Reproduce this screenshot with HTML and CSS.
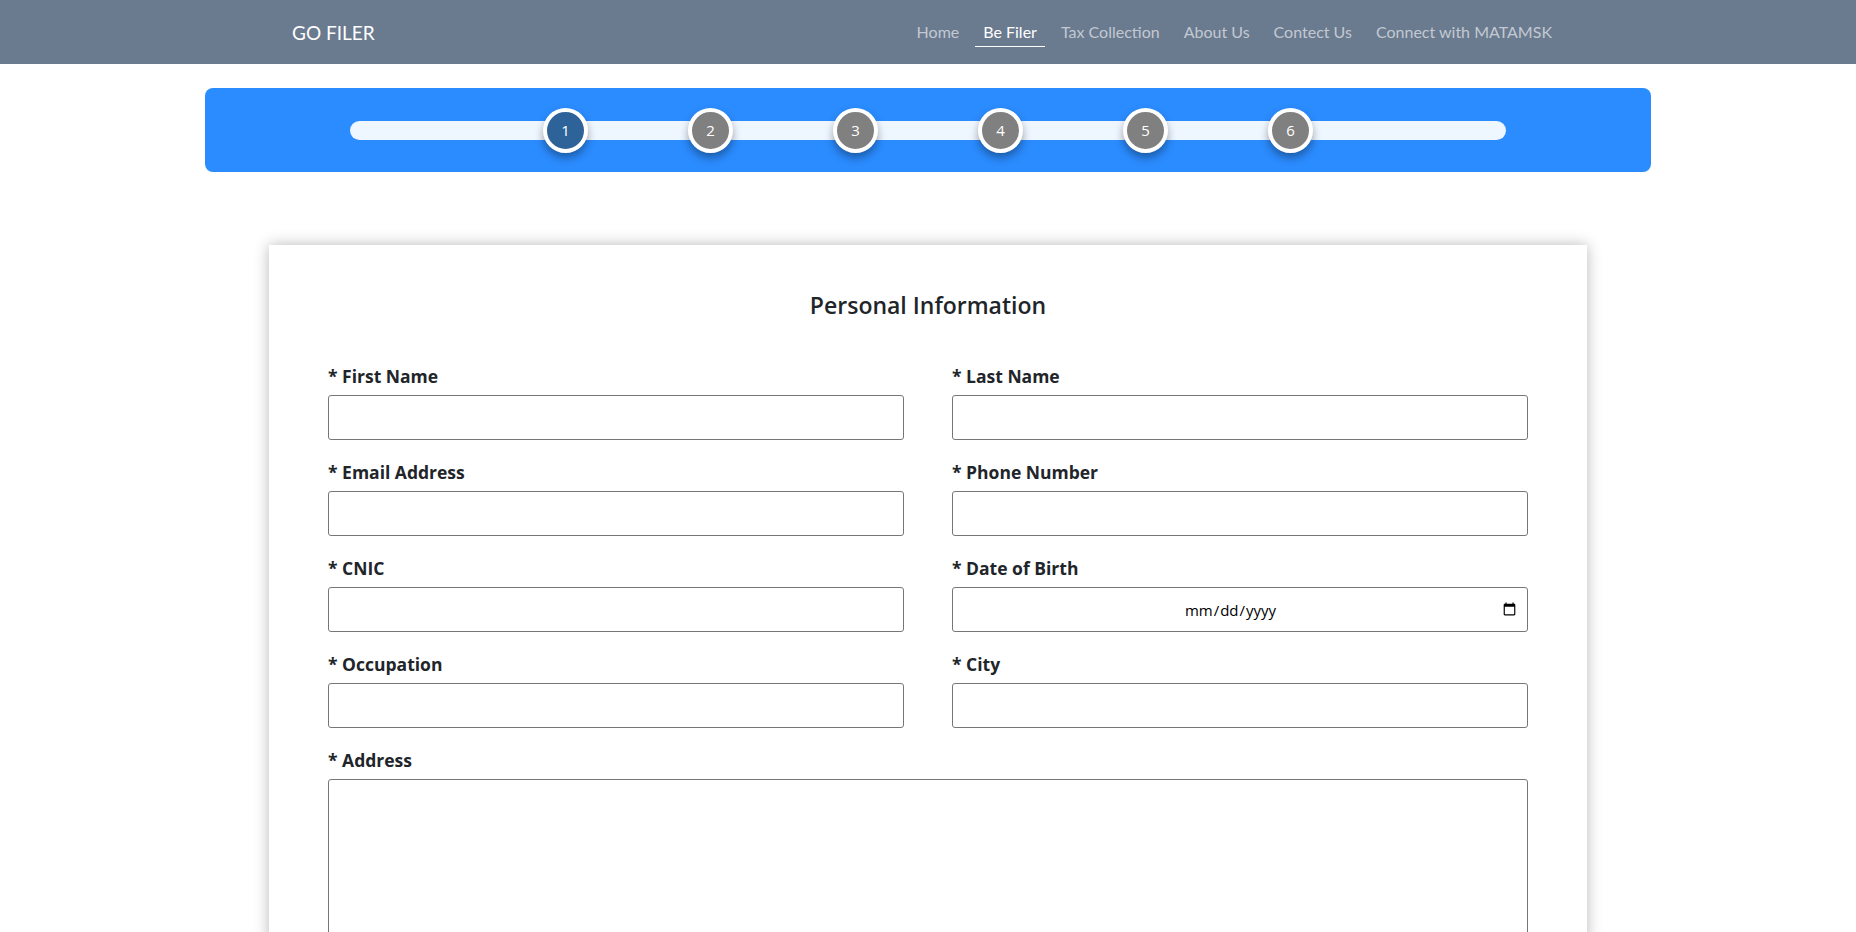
FILE: index.html
```html
<!DOCTYPE html>
<html>
<head>
<meta charset="utf-8">
<title>GO FILER</title>
<link rel="stylesheet" href="styles.css">
</head>
<body>
<header class="navbar">
  <div class="nav-inner">
    <a class="brand" href="#">GO FILER</a>
    <nav class="nav-links">
      <a href="#" class="nav-link">Home</a>
      <a href="#" class="nav-link active">Be Filer</a>
      <a href="#" class="nav-link">Tax Collection</a>
      <a href="#" class="nav-link">About Us</a>
      <a href="#" class="nav-link">Contect Us</a>
      <a href="#" class="nav-link">Connect with MATAMSK</a>
    </nav>
  </div>
</header>

<section class="progress-box">
  <div class="track">
    <span class="step current">1</span>
    <span class="step">2</span>
    <span class="step">3</span>
    <span class="step">4</span>
    <span class="step">5</span>
    <span class="step">6</span>
  </div>
</section>

<main class="card">
  <h2 class="card-title">Personal Information</h2>
  <form class="form-grid">
    <div class="field">
      <label class="label">* First Name</label>
      <input class="input" type="text">
    </div>
    <div class="field">
      <label class="label">* Last Name</label>
      <input class="input" type="text">
    </div>
    <div class="field">
      <label class="label">* Email Address</label>
      <input class="input" type="email">
    </div>
    <div class="field">
      <label class="label">* Phone Number</label>
      <input class="input" type="text">
    </div>
    <div class="field">
      <label class="label">* CNIC</label>
      <input class="input" type="text">
    </div>
    <div class="field">
      <label class="label">* Date of Birth</label>
      <input class="input date" type="date">
    </div>
    <div class="field">
      <label class="label">* Occupation</label>
      <input class="input" type="text">
    </div>
    <div class="field">
      <label class="label">* City</label>
      <input class="input" type="text">
    </div>
    <div class="field full">
      <label class="label">* Address</label>
      <textarea class="input textarea"></textarea>
    </div>
  </form>
</main>
</body>
</html>
```
FILE: styles.css
```css
* { box-sizing: border-box; }
html, body { margin: 0; padding: 0; }
body {
  font-family: Lato, "Noto Sans", sans-serif;
  color: #212529;
  background: #fff;
}
.navbar {
  background: #6a7a8f;
  height: 64px;
}
.nav-inner {
  width: 1296px;
  margin: 0 auto;
  height: 100%;
  display: flex;
  align-items: center;
  justify-content: space-between;
  padding: 0 16px 0 12px;
}
.brand {
  color: #fff;
  text-decoration: none;
  font-size: 19px;
}
.nav-links {
  display: flex;
  gap: 8px;
  align-items: center;
}
.nav-link {
  color: #c3c9d2;
  text-decoration: none;
  font-size: 16px;
  padding: 5px 8px 5px;
  border-bottom: 1px solid transparent;
}
.nav-link.active {
  color: #fff;
  border-bottom-color: #fff;
}
.progress-box {
  width: 1446px;
  height: 84px;
  margin: 24px auto 0;
  background: #2b8cff;
  border-radius: 8px;
  display: flex;
  align-items: center;
  justify-content: center;
}
.track {
  width: 80%;
  height: 19px;
  background: #eef6ff;
  border-radius: 10px;
  display: flex;
  align-items: center;
  justify-content: center;
  gap: 100px;
}
.step {
  width: 45px;
  height: 45px;
  flex: none;
  border-radius: 50%;
  border: 4px solid #fff;
  background: #808080;
  color: #fff;
  font-family: "Open Sans", sans-serif;
  font-size: 15px;
  display: flex;
  align-items: center;
  justify-content: center;
  box-shadow: 0 5px 9px rgba(0, 0, 0, 0.35);
}
.step.current { background: #2e6399; }
.card {
  width: 1318px;
  margin: 73px auto 0;
  background: #fff;
  box-shadow: 0 0 14px rgba(0, 0, 0, 0.28);
  padding: 46px 59px 40px;
}
.card-title {
  margin: 0 0 47px;
  text-align: center;
  font-family: "Open Sans", sans-serif;
  font-size: 23px;
  font-weight: 600;
  line-height: 28px;
}
.form-grid {
  display: grid;
  grid-template-columns: 1fr 1fr;
  column-gap: 48px;
  row-gap: 22px;
}
.field {
  display: flex;
  flex-direction: column;
  gap: 9px;
}
.field.full { grid-column: 1 / -1; }
.label {
  font-family: "Open Sans", sans-serif;
  font-weight: 700;
  font-size: 17.5px;
  line-height: 20px;
}
.input {
  height: 45px;
  border: 1px solid #767676;
  border-radius: 3px;
  font-family: "Open Sans", sans-serif;
  font-size: 15px;
  padding: 4px 8px;
  background: #fff;
}
.input.date { text-align: center; }
.textarea {
  height: 200px;
  resize: none;
}
```
